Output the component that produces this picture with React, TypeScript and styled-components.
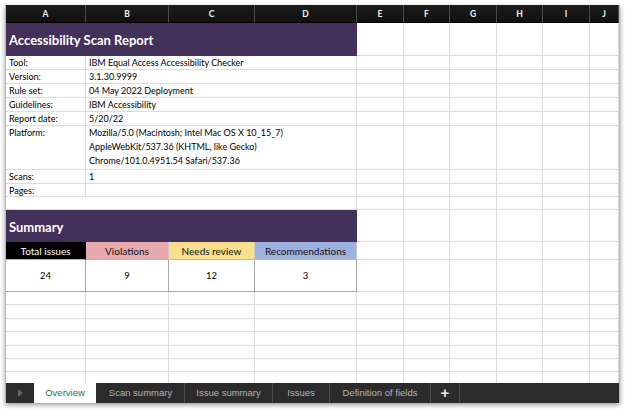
import React from "react";
import styled, { createGlobalStyle } from "styled-components";

const Global = createGlobalStyle`
  html, body { margin: 0; padding: 0; background: #ffffff; }
  body { width: 626px; height: 410px; overflow: hidden; }
  * { box-sizing: border-box; }
`;

const COLS = "80px 83px 86px 102px 47px 46px 47px 46px 47px 1fr";
const GRID = "#dcdcdc";
const PURPLE = "#43315a";
const CELL_FONT = `"Lato", "Open Sans", sans-serif`;

const Window = styled.div`
  margin: 5px 6px 7px 5px;
  width: 615px;
  height: 398px;
  display: flex;
  flex-direction: column;
  overflow: hidden;
  border-left: 1px solid #b8b8b8;
  border-right: 1px solid #b8b8b8;
  box-shadow: 0 2px 5px rgba(0, 0, 0, 0.4);
  background: #fff;
`;

const Sheet = styled.div`
  flex: 1;
  overflow: hidden;
  display: flex;
  flex-direction: column;
`;

const Row = styled.div<{ $h: number }>`
  display: grid;
  grid-template-columns: ${COLS};
  height: ${(p) => p.$h}px;
  flex: none;
`;

const HeaderRow = styled(Row)`
  background: linear-gradient(#1c1c1c, #101010);
`;

const ColLetter = styled.div`
  display: flex;
  align-items: center;
  justify-content: center;
  color: #f2f2f2;
  font: 700 8.5px ${CELL_FONT};
  border-right: 1px solid #4a4a4a;
  border-bottom: 1px solid #000;
`;

const Cell = styled.div<{ $span?: number }>`
  grid-column: span ${(p) => p.$span ?? 1};
  border-right: 1px solid ${GRID};
  border-bottom: 1px solid ${GRID};
  font: 400 9px ${CELL_FONT};
  color: #000;
  padding: 0 3px;
  line-height: 13px;
  white-space: nowrap;
  overflow: hidden;
`;

const Banner = styled.div`
  grid-column: span 4;
  background: ${PURPLE};
  color: #fff;
  font: 700 13px ${CELL_FONT};
  display: flex;
  align-items: center;
  padding: 2px 3px 0;
  border-bottom: 1px solid ${PURPLE};
`;

const MultiLine = styled(Cell)`
  white-space: pre;
  line-height: 14px;
`;

type Kind = "total" | "violation" | "review" | "recommend";
const kindBg: Record<Kind, string> = {
  total: "#000000",
  violation: "#e7a9ae",
  review: "#f7df8c",
  recommend: "#9fb1df",
};

const Category = styled.div<{ $kind: Kind }>`
  background: ${(p) => kindBg[p.$kind]};
  color: ${(p) => (p.$kind === "total" ? "#fff" : "#111")};
  font: 400 10px ${CELL_FONT};
  display: flex;
  align-items: center;
  justify-content: center;
  border-right: 1px solid ${(p) => (p.$kind === "total" ? "#000" : "#c9c9c9")};
  border-bottom: 1px solid #b5b5b5;
`;

const Value = styled.div`
  font: 400 9.5px ${CELL_FONT};
  color: #000;
  display: flex;
  align-items: center;
  justify-content: center;
  border-right: 1px solid #a9a9a9;
  border-bottom: 1px solid #a9a9a9;
`;

const TabBar = styled.div`
  height: 20px;
  flex: none;
  display: flex;
  background: #2b2b2b;
  font-family: "Liberation Sans", Arial, sans-serif;
  font-size: 9.5px;
`;

const Arrow = styled.div`
  width: 28px;
  display: flex;
  align-items: center;
  justify-content: center;
  &::before {
    content: "";
    border-left: 5px solid #666;
    border-top: 4px solid transparent;
    border-bottom: 4px solid transparent;
  }
`;

const Tab = styled.div<{ $w: number; $active?: boolean }>`
  width: ${(p) => p.$w}px;
  display: flex;
  align-items: center;
  justify-content: center;
  background: ${(p) => (p.$active ? "#ffffff" : "transparent")};
  color: ${(p) => (p.$active ? "#1b7a44" : "#b4b4b4")};
  border-right: 1px solid ${(p) => (p.$active ? "#2b2b2b" : "#4d4d4d")};
  padding-bottom: 1px;
`;

const Plus = styled(Tab)`
  color: #e8e8e8;
  font-size: 15px;
  font-weight: 700;
`;

const letters = ["A", "B", "C", "D", "E", "F", "G", "H", "I", "J"];

const Blank = () => (
  <>
    {Array.from({ length: 6 }).map((_, i) => (
      <Cell key={i} />
    ))}
  </>
);

const info: [string, string][] = [
  ["Tool:", "IBM Equal Access Accessibility Checker"],
  ["Version:", "3.1.30.9999"],
  ["Rule set:", "04 May 2022 Deployment"],
  ["Guidelines:", "IBM Accessibility"],
  ["Report date:", "5/20/22"],
];

export default function App() {
  return (
    <>
      <Global />
      <Window>
        <Sheet>
          <HeaderRow $h={18}>
            {letters.map((l) => (
              <ColLetter key={l}>{l}</ColLetter>
            ))}
          </HeaderRow>
          <Row $h={33}>
            <Banner>Accessibility Scan Report</Banner>
            <Blank />
          </Row>
          {info.map(([k, v]) => (
            <Row $h={14} key={k}>
              <Cell>{k}</Cell>
              <Cell $span={3}>{v}</Cell>
              <Blank />
            </Row>
          ))}
          <Row $h={44}>
            <MultiLine>Platform:</MultiLine>
            <MultiLine $span={3}>
              {"Mozilla/5.0 (Macintosh; Intel Mac OS X 10_15_7)\nAppleWebKit/537.36 (KHTML, like Gecko)\nChrome/101.0.4951.54 Safari/537.36"}
            </MultiLine>
            <Blank />
          </Row>
          <Row $h={14}>
            <Cell>Scans:</Cell>
            <Cell $span={3}>1</Cell>
            <Blank />
          </Row>
          <Row $h={13}>
            <Cell>Pages:</Cell>
            <Cell $span={3} />
            <Blank />
          </Row>
          <Row $h={13}>
            <Cell $span={4} />
            <Blank />
          </Row>
          <Row $h={32}>
            <Banner>Summary</Banner>
            <Blank />
          </Row>
          <Row $h={18}>
            <Category $kind="total">Total issues</Category>
            <Category $kind="violation">Violations</Category>
            <Category $kind="review">Needs review</Category>
            <Category $kind="recommend">Recommendations</Category>
            <Blank />
          </Row>
          <Row $h={32}>
            <Value>24</Value>
            <Value>9</Value>
            <Value>12</Value>
            <Value>3</Value>
            <Blank />
          </Row>
          {Array.from({ length: 8 }).map((_, r) => (
            <Row $h={13.4} key={r}>
              <Cell />
              <Cell />
              <Cell />
              <Cell />
              <Blank />
            </Row>
          ))}
        </Sheet>
        <TabBar>
          <Arrow />
          <Tab $w={63} $active>
            Overview
          </Tab>
          <Tab $w={88}>Scan summary</Tab>
          <Tab $w={88}>Issue summary</Tab>
          <Tab $w={57}>Issues</Tab>
          <Tab $w={101}>Definition of fields</Tab>
          <Plus $w={29}>+</Plus>
        </TabBar>
      </Window>
    </>
  );
}
